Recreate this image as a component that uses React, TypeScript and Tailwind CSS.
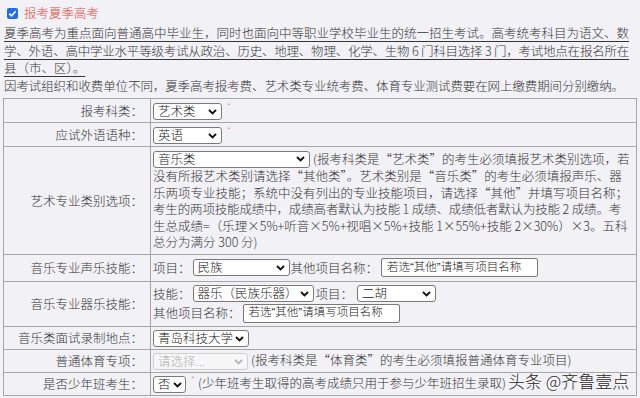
import React from 'react';

const Chevron = ({ light }: { light?: boolean }) => (
  <svg width="9" height="6" viewBox="0 0 9 6" className="shrink-0">
    <path d="M1 1l3.5 3.5L8 1" fill="none" stroke={light ? '#b5b5b5' : '#111'} strokeWidth="1.9" />
  </svg>
);

const Select: React.FC<{ value: string; className: string; disabled?: boolean }> = ({ value, className, disabled }) => (
  <span
    className={`inline-flex items-center justify-between h-[17px] border rounded-[3px] pl-[4px] pr-[4px] align-middle leading-none whitespace-nowrap ${
      disabled ? 'border-[#cfcfcf] bg-[#f7f7f7] text-[#b0b0b0]' : 'border-[#7a7a7a] bg-white text-[#222]'
    } ${className}`}
  >
    <span className="mr-[2px]">{value}</span>
    <Chevron light={disabled} />
  </span>
);

const Input: React.FC<{ className: string }> = ({ className }) => (
  <span className={`inline-flex items-center h-[19px] border border-[#7a7a7a] rounded-[2px] bg-white pl-[5px] text-[11.5px] text-[#222] align-middle leading-none whitespace-nowrap font-['Liberation_Sans','Noto_Sans_CJK_SC',sans-serif] ${className}`}>
    若选“其他”请填写项目名称
  </span>
);

const Star = () => <span className="inline-block align-top ml-[5px] text-[9px] leading-[12px] text-[#f28b8b]">*</span>;

const Label: React.FC<{ children: React.ReactNode }> = ({ children }) => (
  <td className="w-[147px] border border-[#a6a6a6] pr-[7px] text-right align-middle whitespace-nowrap">{children}</td>
);

const Cell: React.FC<{ children: React.ReactNode }> = ({ children }) => (
  <td className="border border-[#a6a6a6] pl-[2px] align-middle whitespace-nowrap">{children}</td>
);

export default function App() {
  return (
    <div className="w-[640px] h-[398px] overflow-hidden relative bg-[#f1f1f6] text-[#363636] font-light text-[12.5px] leading-[17.5px] font-['Noto_Sans_CJK_SC',sans-serif]">
      <div className="flex items-center h-[24px] pl-[7px] pt-[2px]">
        <svg width="11" height="11" viewBox="0 0 11 11">
          <rect x="0" y="0" width="11" height="11" rx="2" fill="#1f6fe0" />
          <path d="M2.3 5.6l2.2 2.2 4.2-4.6" fill="none" stroke="#fff" strokeWidth="1.7" />
        </svg>
        <span className="ml-[6px] text-[12.5px] text-[#e8453c]">报考夏季高考</span>
      </div>
      <div className="px-[4px] w-[633px]">
        <div className="underline underline-offset-[3px] whitespace-nowrap [text-align-last:justify]">
          夏季高考为重点面向普通高中毕业生，同时也面向中等职业学校毕业生的统一招生考试。高考统考科目为语文、数
        </div>
        <div className="underline underline-offset-[3px] whitespace-nowrap tracking-[-0.25px] [text-align-last:justify]">
          学、外语、高中学业水平等级考试从政治、历史、地理、物理、化学、生物 6 门科目选择 3 门，考试地点在报名所在
        </div>
        <div className="underline underline-offset-[3px] whitespace-nowrap">县（市、区）。</div>
        <div className="whitespace-nowrap tracking-[-0.1px]">
          因考试组织和收费单位不同，夏季高考报考费、艺术类专业统考费、体育专业测试费要在网上缴费期间分别缴纳。
        </div>
      </div>
      <table className="mt-[4px] ml-[3px] w-[634px] border-collapse border border-[#8c8c8c]">
        <tbody>
          <tr className="h-[24px]">
            <Label>报考科类：</Label>
            <Cell>
              <Select value="艺术类" className="w-[69px]" />
              <Star />
            </Cell>
          </tr>
          <tr className="h-[24px]">
            <Label>应试外语语种：</Label>
            <Cell>
              <Select value="英语" className="w-[69px]" />
              <Star />
            </Cell>
          </tr>
          <tr className="h-[106px]">
            <Label>艺术专业类别选项：</Label>
            <td className="border border-[#a6a6a6] pl-[2px] pt-[3px] pb-[3px] align-top whitespace-nowrap leading-[16.5px]">
              <div className="h-[18px] flex items-center">
                <Select value="音乐类" className="w-[157px]" />
                <span className="ml-[3px]">(报考科类是“艺术类”的考生必须填报艺术类别选项，若</span>
              </div>
              <div>没有所报艺术类别请选择“其他类”。艺术类别是“音乐类”的考生必须填报声乐、器</div>
              <div>乐两项专业技能；系统中没有列出的专业技能项目，请选择“其他”并填写项目名称；</div>
              <div className="tracking-[-0.15px]">考生的两项技能成绩中，成绩高者默认为技能 1 成绩、成绩低者默认为技能 2 成绩。考</div>
              <div>生总成绩=（乐理×5%+听音×5%+视唱×5%+技能 1×55%+技能 2×30%）×3。五科</div>
              <div>总分为满分 300 分)</div>
            </td>
          </tr>
          <tr className="h-[27px]">
            <Label>音乐专业声乐技能：</Label>
            <Cell>
              <div className="flex items-center">
                <span>项目：</span>
                <Select value="民族" className="w-[97px] ml-[2px]" />
                <span className="ml-[1px]">其他项目名称：</span>
                <Input className="w-[157px] ml-[3px]" />
              </div>
            </Cell>
          </tr>
          <tr className="h-[45px]">
            <Label>音乐专业器乐技能：</Label>
            <Cell>
              <div className="flex items-center h-[19px]">
                <span>技能：</span>
                <Select value="器乐（民族乐器）" className="w-[121px] ml-[2px]" />
                <span className="ml-[2px]">项目：</span>
                <Select value="二胡" className="w-[79px] ml-[4px]" />
              </div>
              <div className="flex items-center h-[20px]">
                <span>其他项目名称：</span>
                <Input className="w-[157px] ml-[2px]" />
              </div>
            </Cell>
          </tr>
          <tr className="h-[23px]">
            <Label>音乐类面试录制地点：</Label>
            <Cell>
              <Select value="青岛科技大学" className="w-[96px]" />
            </Cell>
          </tr>
          <tr className="h-[23px]">
            <Label>普通体育专项：</Label>
            <Cell>
              <Select value="请选择..." className="w-[95px]" disabled />
              <span className="ml-[3px]">(报考科类是“体育类”的考生必须填报普通体育专业项目)</span>
            </Cell>
          </tr>
          <tr className="h-[23px]">
            <Label>是否少年班考生：</Label>
            <Cell>
              <Select value="否" className="w-[33px]" />
              <Star />
              <span className="ml-[3px]">(少年班考生取得的高考成绩只用于参与少年班招生录取)</span>
            </Cell>
          </tr>
        </tbody>
      </table>
      <div className="absolute left-[508px] top-[370px] text-[17px] leading-[22px] text-[#262626] whitespace-nowrap [text-shadow:0_0_2px_#fff,0_0_3px_#fff]">
        头条 @齐鲁壹点
      </div>
    </div>
  );
}
